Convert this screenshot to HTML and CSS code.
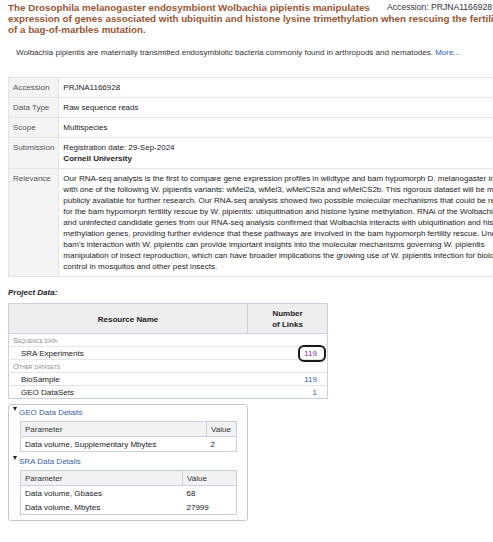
FILE: index.html
```html
<!DOCTYPE html>
<html>
<head>
<meta charset="utf-8">
<link rel="stylesheet" href="styles.css">
</head>
<body>
<div class="page">
  <h1 class="title"><span class="acc">Accession: PRJNA1166928</span>The Drosophila melanogaster endosymbiont Wolbachia pipientis manipulates expression of genes associated with ubiquitin and histone lysine trimethylation when rescuing the fertility of a bag-of-marbles mutation.</h1>
  <p class="desc">Wolbachia pipientis are maternally transmitted endosymbiotic bacteria commonly found in arthropods and nematodes. <a class="more" href="#">More...</a></p>

  <table class="info">
    <tr><th>Accession</th><td>PRJNA1166928</td></tr>
    <tr><th>Data Type</th><td>Raw sequence reads</td></tr>
    <tr><th>Scope</th><td>Multispecies</td></tr>
    <tr><th>Submission</th><td>Registration date: 29-Sep-2024<br><b>Cornell University</b></td></tr>
    <tr><th>Relevance</th><td class="rel">Our RNA-seq analysis is the first to compare gene expression profiles in wildtype and bam hypomorph D. melanogaster infected<br>with one of the following W. pipientis variants: wMel2a, wMel3, wMelCS2a and wMelCS2b. This rigorous dataset will be made<br>publicly available for further research. Our RNA-seq analysis showed two possible molecular mechanisms that could be responsible<br>for the bam hypomorph fertility rescue by W. pipientis: ubiquitination and histone lysine methylation. RNAi of the Wolbachia-infected<br>and uninfected candidate genes from our RNA-seq analysis confirmed that Wolbachia interacts with ubiquitination and histone<br>methylation genes, providing further evidence that these pathways are involved in the bam hypomorph fertility rescue. Understanding<br>bam's interaction with W. pipientis can provide important insights into the molecular mechanisms governing W. pipientis<br>manipulation of insect reproduction, which can have broader implications the growing use of W. pipientis infection for biological<br>control in mosquitos and other pest insects.</td></tr>
  </table>

  <div class="pd-label">Project Data:</div>
  <table class="pd">
    <thead>
      <tr><th class="rn">Resource Name</th><th class="nl">Number<br>of Links</th></tr>
    </thead>
    <tbody>
      <tr class="grp"><td colspan="2">Sequence data</td></tr>
      <tr><td class="name">SRA Experiments</td><td class="num fcell"><a class="visited focus" href="#">119</a></td></tr>
      <tr class="grp"><td colspan="2">Other datasets</td></tr>
      <tr><td class="name">BioSample</td><td class="num"><a href="#">119</a></td></tr>
      <tr><td class="name">GEO DataSets</td><td class="num"><a href="#">1</a></td></tr>
    </tbody>
  </table>

  <div class="details">
    <div class="dhead"><span class="tri"></span><span class="dtitle">GEO Data Details</span></div>
    <table class="dt geo">
      <tr><th class="p">Parameter</th><th class="v">Value</th></tr>
      <tr><td>Data volume, Supplementary Mbytes</td><td class="vc">2</td></tr>
    </table>
    <div class="dhead"><span class="tri"></span><span class="dtitle">SRA Data Details</span></div>
    <table class="dt sra">
      <tr><th class="p">Parameter</th><th class="v">Value</th></tr>
      <tr><td>Data volume, Gbases</td><td class="vc">68</td></tr>
      <tr><td>Data volume, Mbytes</td><td class="vc">27999</td></tr>
    </table>
  </div>
</div>
</body>
</html>
```

FILE: styles.css
```css
html, body {
  margin: 0;
  padding: 0;
  background: #fff;
  overflow-x: hidden;
}
body {
  font-family: "Liberation Sans", Arial, sans-serif;
  font-size: 8px;
  color: #222;
}
.page {
  width: 530px;
  padding: 2px 0 0 8px;
}
.title {
  margin: 0 28px 0 0;
  font-size: 9.8px;
  line-height: 11px;
  font-weight: bold;
  color: #985735;
}
.acc {
  float: right;
  margin-right: 18px;
  font-size: 8.6px;
  font-weight: normal;
  color: #333;
  line-height: 11px;
}
.desc {
  margin: 12px 0 0 8px;
  line-height: 11px;
  color: #333;
}
.more { color: #2b5cab; text-decoration: none; }

.info {
  margin-top: 19px;
  width: 100%;
  border-collapse: collapse;
  line-height: 11px;
}
.info th, .info td {
  border: 1px solid #e4e4e4;
  padding: 4px;
  vertical-align: top;
  text-align: left;
}
.info th {
  width: 43px;
  font-weight: normal;
  color: #555;
  background: #f4f4f4;
}
.info td { color: #222; }
.info td.rel { white-space: nowrap; }

.pd-label {
  margin-top: 10px;
  font-weight: bold;
  font-style: italic;
  line-height: 11px;
}
.pd {
  margin-top: 5px;
  width: 320px;
  border-collapse: collapse;
  border: 1px solid #c8d2dc;
  line-height: 11px;
}
.pd thead th {
  background: #eeeeee;
  border: 1px solid #c8d2dc;
  padding: 4px 2px 3px;
  font-weight: bold;
  text-align: center;
  color: #222;
}
.pd .rn { width: 234px; }
.pd td {
  padding: 1px 4px 0;
  border-top: 1px solid #e6e6e6;
}
.pd .grp td {
  font-variant: small-caps;
  font-size: 7.5px;
  color: #888;
  padding: 1px 4px 0;
}
.pd .name { padding-left: 12px; }
.pd .num { text-align: right; padding-right: 10px; }
.pd .fcell { padding-right: 3px; }
.pd a { color: #2b5cab; text-decoration: none; }
.pd a.visited { color: #8a1e9a; }
.pd a.focus {
  display: inline-block;
  padding: 1px 7px 1px 4px;
  margin: -1px 0;
  outline: 2px solid #1a1a1a;
  border-radius: 4px;
}

.details {
  margin-top: 5px;
  width: 224px;
  border: 1px solid #c8c8c8;
  border-radius: 3px;
  padding: 2px 10px 5px 4px;
}
.dhead {
  line-height: 11px;
}
.tri {
  display: inline-block;
  width: 0;
  height: 0;
  border-left: 2.5px solid transparent;
  border-right: 2.5px solid transparent;
  border-top: 4px solid #222;
  vertical-align: 4px;
  margin-right: 2px;
}
.dtitle { color: #3b62a3; }
.dt {
  margin: 3px 0 4px 7px;
  width: 217px;
  border-collapse: collapse;
  border: 1px solid #c8d2dc;
  line-height: 11px;
}
.dt:last-child { margin-bottom: 0; }
.dt th {
  background: #f2f2f2;
  font-weight: normal;
  text-align: left;
  padding: 2px 4px 1px;
  border-bottom: 1px solid #c8d2dc;
  color: #333;
}
.dt .v { border-left: 1px solid #c8d2dc; }
.dt td { padding: 2px 4px 1px; color: #222; }
.geo .v, .geo .vc { width: 21px; }
.sra .v, .sra .vc { width: 45px; }
```
